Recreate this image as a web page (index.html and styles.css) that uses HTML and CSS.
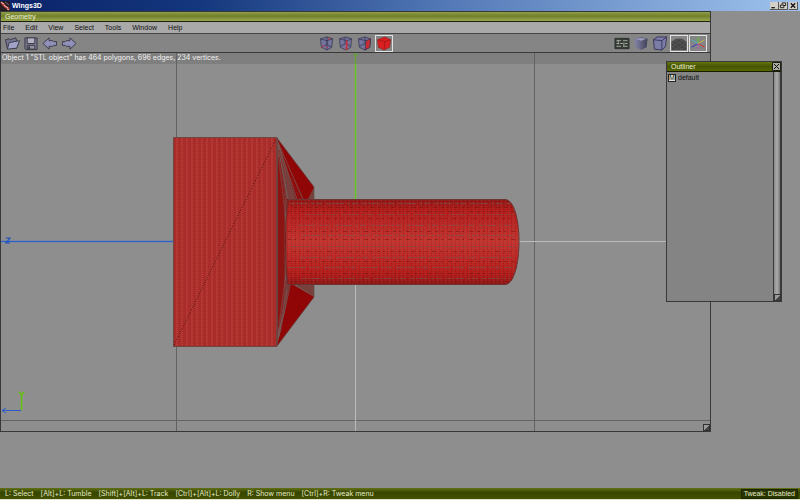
FILE: index.html
```
<!DOCTYPE html>
<html lang="en">
<head>
<meta charset="utf-8">
<title>Wings3D</title>
<link rel="stylesheet" href="styles.css">
</head>
<body>
<header class="titlebar">
  <svg class="logo" viewBox="0 0 10 10"><path fill="#251a20" d="M0 0h10v10H0z"/><path d="M0 1l4 1 2 3 4 2-1 2-4-2-3-3z" fill="#b8413d"/><path d="M1 1l3 2M4 4l4 3M7 8l2 1" stroke="#f3c6c3"/><path d="M5 1l4 3" stroke="#756b80"/></svg>
  <h1>Wings3D</h1>
  <div class="controls">
    <button aria-label="Minimize"><svg viewBox="0 0 8 8"><path d="M1 6.5h4" stroke="#111" stroke-width="1.4"/></svg></button>
    <button aria-label="Restore"><svg viewBox="0 0 8 8" fill="none" stroke="#111"><path d="M3 3V1h4v3H5M1 3.5h4v3H1z"/></svg></button>
    <button class="quit" aria-label="Close"><svg viewBox="0 0 8 8"><path d="M1.5 1.5l5 5M6.5 1.5l-5 5" stroke="#111" stroke-width="1.5"/></svg></button>
  </div>
</header>
<main class="desktop">
  <section class="window geometry">
    <h2>Geometry</h2>
    <nav class="menu"><button>File</button><button>Edit</button><button>View</button><button>Select</button><button>Tools</button><button>Window</button><button>Help</button></nav>
    <div class="toolbar">
      <div class="tools files">
        <button aria-label="Open"><svg viewBox="0 0 16 16" stroke="#3a3a48" stroke-width="1"><path d="M1 4l4-1 1 1 6-2 1 3v8H3z" fill="#74748f"/><path d="M3 14L5 7l11-2-3 8z" fill="#a2a2c8"/></svg></button>
        <button aria-label="Save"><svg viewBox="0 0 16 16" stroke="#3a3a48"><path d="M1.500 2h13v12.500h-12l-1-1z" fill="#77778f"/><path d="M4 2h8v6H4z" fill="#b2b2c2"/><path d="M4 10h8v4H4z" fill="#9494a5"/><path d="M6 11v3" stroke-width="2"/></svg></button>
        <button aria-label="Undo"><svg viewBox="0 0 16 16"><path d="M.5 8L7 2v3h4l1 1h3v4h-3l-1 1H7v3z" fill="#9090ba" stroke="#3a3a48"/></svg></button>
        <button aria-label="Redo"><svg viewBox="0 0 16 16"><path d="M15.500 8L9 2v3H5L4 6H1v4h3l1 1h4v3z" fill="#9090ba" stroke="#3a3a48"/></svg></button>
      </div>
      <div class="tools modes">
        <button aria-label="Vertex selection"><svg viewBox="0 0 16 16" stroke="#363650" stroke-width=".8"><path d="M1 3l7-2 6 2-1 9-5 3-6-3z" fill="#74749c"/><path d="M1 3l7 2 6-2M8 5v10M2 12l6-3 5 3M8 9V1" fill="none"/><path d="M2 12l3-2M9 4l3-2M7 12h2" stroke="#b8404e" stroke-width="1.200"/></svg></button>
        <button aria-label="Edge selection"><svg viewBox="0 0 16 16" stroke="#363650" stroke-width=".8"><path d="M1 3l7-2 6 2-1 9-5 3-6-3z" fill="#74749c"/><path d="M1 3l8 2 5-2M2 11l6-3 5 3M7 8V1" fill="none"/><path d="M9 5L8.500 15" stroke="#c43440" stroke-width="2"/></svg></button>
        <button aria-label="Face selection"><svg viewBox="0 0 16 16" stroke="#363650" stroke-width=".8"><path d="M1 3l7-2 6 2-1 9-5 3-6-3z" fill="#74749c"/><path d="M9 5l5-2-1 9-5 3z" fill="#cc2d35"/><path d="M1 3l8 2M2 11l6-3V1" fill="none"/></svg></button>
        <button class="on" aria-label="Body selection"><svg viewBox="0 0 16 16" stroke="#8a1818" stroke-width=".6"><path d="M1 4l8-3 6 3-1 8-6 3-6-3z" fill="#d91f20"/><path d="M1 4l8 2 6-2M9 6L8 15" fill="none"/></svg></button>
      </div>
      <div class="tools views">
        <button aria-label="Geometry graph"><svg viewBox="0 0 16 16"><path d="M.5 2.500h15v11H.5z" fill="#343b34" stroke="#2b302b"/><path d="M2 5h5M9 5h5M2 8h3M6 8h3M11 8h3M2 11h5M9 11h5M4 4v5M10 7v4" stroke="#a8aca2" stroke-width="1"/></svg></button>
        <button aria-label="Smooth preview"><svg viewBox="0 0 16 16"><defs><linearGradient id="shade"><stop stop-color="#8585a8"/><stop offset="1" stop-color="#404058"/></linearGradient></defs><path d="M1 3l7-2 7 2-1 9-6 3-6-3z" fill="url(#shade)"/><path d="M2 3l6-1 6 1-6 2z" fill="#9a9aba"/></svg></button>
        <button aria-label="Orthographic view"><svg viewBox="0 0 16 16" stroke="#303052" stroke-width=".9"><path d="M1 4l4-3h10l-1 10-4 4-8-1z" fill="#7c7ca8"/><path d="M1 4l9 1v10M10 5l5-4" fill="none"/></svg></button>
        <button class="on" aria-label="Ground plane"><svg viewBox="0 0 16 16"><path d="M0 6l5-3h6l5 3v9H0z" fill="#454545"/><path d="M0 7l12 8M0 11l7 4M3 4l13 8M8 3l8 5M16 7L4 15M16 11l-7 4M13 4L0 12M8 3L0 8" stroke="#626262" stroke-width=".5"/></svg></button>
        <button class="on" aria-label="Axes"><svg viewBox="0 0 16 16"><path d="M8 8V1" stroke="#5fc832"/><path d="M8 8l7 4" stroke="#e0282e"/><path d="M8 8l-7 4" stroke="#3033d0"/><path d="M8 8l7-4" stroke="#c8bc41"/><path d="M8 8L1 4" stroke="#3dbcbe"/><path d="M8 8v6" stroke="#b058be"/></svg></button>
      </div>
    </div>
    <div class="view">
      <p class="info">Object 1 "STL object" has 464 polygons, 696 edges, 234 vertices.</p>
      <svg class="scene" viewBox="1 53 709 378" preserveAspectRatio="xMidYMid slice" role="img" aria-label="Bolt model, side view">
        <defs>
          <pattern id="head" width="5" height="2" patternUnits="userSpaceOnUse"><path d="M0 0h5v2H0z" fill="#ab2b29"/><path d="M1 0h1v2H1z" fill="#b23835"/><path d="M2 0h1v1H2z" fill="#b5403c"/><path d="M4 1h1v1H4z" fill="#a3302d"/></pattern>
          <pattern id="mesh" width="4" height="2" patternUnits="userSpaceOnUse"><path d="M1 0h1v1H1z" fill="#84504b" opacity=".45"/><path d="M3 1h1v1H3z" fill="#85100f" opacity=".4"/></pattern>
          <linearGradient id="round" x2="0" y2="1"><stop stop-color="#8e1715"/><stop offset=".12" stop-color="#b51c1a"/><stop offset=".5" stop-color="#c63530"/><stop offset=".88" stop-color="#b51c1a"/><stop offset="1" stop-color="#8e1715"/></linearGradient>
        </defs>
        <g fill="none" shape-rendering="crispEdges">
          <path d="M176.500 53v378M534.500 53v378M0 420.500h711" stroke="#626262"/>
          <path d="M355.500 285v146M519 241.500h192" stroke="#bababa"/>
          <path d="M355.500 53v146" stroke="#74cc2c" stroke-width="3" opacity=".2"/>
          <path d="M355.500 53v146" stroke="#66c81c"/>
          <path d="M1 241.500h172" stroke="#4a78d0" stroke-width="3" opacity=".25"/>
          <path d="M1 241.500h172" stroke="#2e60c8"/>
        </g>
        <path d="M353.500 54l2 3 3-3" stroke="#5cb81c" fill="none"/>
        <path d="M6 238h4l-4 5h4" stroke="#1c4fc0" fill="none" stroke-width="1.200"/>
        <path d="M3 410.500h18M6 408l-4 2.500 4 2.500" stroke="#2c5cc8" fill="none"/>
        <path d="M21.500 410V395M19 392l2.500 3 2.500-3" stroke="#62c40c" fill="none" stroke-width="1.500"/>
        <path d="M277 138l37 49v110l-37 49z" fill="#900505"/>
        <path d="M314 187v12h-8zM314 297v-13h-23z" fill="#77403a"/>
        <path d="M277 138l37 49-6 12h-12z" fill="#900505"/>
        <path d="M277 138l19 61h-9l-2 42 2 43h4l-14 62z" fill="#74403d"/>
        <path d="M277.500 139l7 52v102l-7 52z" fill="#8b1412"/>
        <path d="M277 140l26 59M277 140l20 59M277 141l15 58M277 142l11 57M277 143l9 77M277 342l20-58M277 342l14-56M277 342l10-51M277 342l9-68M314 297l-20-13" stroke="#796360" stroke-width=".7" fill="none"/>
        <path d="M279 150l13 49M279 157l8 50M279 163l6 48M279 325l11-40M279 321l7-40M288 166l14 33M291 178l9 21" stroke="#892927" stroke-dasharray="2 1" fill="none"/>
        <path d="M291 284l23 13-36 48z" fill="#900505"/>
        <path d="M277 138l37 49v12M277 346l37-49v-13" stroke="#63504d" stroke-width=".7" fill="none"/>
        <path d="M173.500 137.500h103.500v209H173.500z" fill="url(#head)" stroke="#6d4542"/>
        <path d="M277 138v208" stroke="#5f4745"/>
        <path d="M174 345L276 139" stroke="#4e1717" stroke-dasharray="1 2"/>
        <path d="M288 199.500h217c9 0 14 20 14 42s-5 43-14 43H288l-2-20v-43z" fill="url(#round)" stroke="#6b3432"/>
        <path d="M288 200h217c9 0 13 20 13 42s-4 42-13 42H288l-2-20v-43z" fill="url(#mesh)"/>
        <g stroke="#80504b" stroke-dasharray="5 1 2 1 9 3 3 2 6 4" stroke-width="1" opacity=".65" fill="none">
          <path d="M290 203.500h221M305 214.500h208M298 225.500h217M302 235.500h215M291 246.500h226M300 257.500h216M288 267.500h226M302 278.500h208"/>
        </g>
        <g stroke="#74120f" stroke-dasharray="3 3 2 5 4 4" opacity=".5" fill="none">
          <path d="M294 207.500h218M288 211.500h226M292 218.500h223M288 231.500h229M288 239.500h229M293 251.500h224M288 261.500h228M288 273.500h225M294 281.500h214"/>
        </g>
      </svg>
      <span class="grip"></span>
    </div>
  </section>
  <section class="window outliner">
    <div class="caption"><h2>Outliner</h2><button aria-label="Close Outliner"><svg viewBox="0 0 9 9"><path d="M.5 .5h8v8h-8z" fill="#a8ada0" stroke="#1a1d10"/><path d="M2 2l5 5M7 2L2 7" stroke="#101010"/></svg></button></div>
    <div class="body">
      <ul><li><span class="badge">M</span>default</li></ul>
      <div class="scroll"></div>
    </div>
    <span class="grip"></span>
  </section>
</main>
<footer class="status">
  <span>L: Select</span><span>[Alt]+L: Tumble</span><span>[Shift]+[Alt]+L: Track</span><span>[Ctrl]+[Alt]+L: Dolly</span><span>R: Show menu</span><span>[Ctrl]+R: Tweak menu</span>
  <output>Tweak: Disabled</output>
</footer>
</body>
</html>
```
FILE: styles.css
```
* { box-sizing: border-box; }
body {
  margin: 0;
  height: 100vh;
  display: flex;
  flex-direction: column;
  overflow: hidden;
  background: #8e8e8e;
  color: #111;
  font: 7px/10px "Liberation Sans", sans-serif;
}
h1, h2, p, ul { margin: 0; padding: 0; font-size: inherit; font-weight: normal; list-style: none; }
button { border: 0; margin: 0; padding: 0; background: none; color: inherit; font: inherit; }
svg { display: block; }
.titlebar {
  flex: none;
  height: 11px;
  display: flex;
  align-items: center;
  gap: 2px;
  background: linear-gradient(90deg, #0b2369, #14377d 25%, #5277b5 55%, #9fc3ed);
  color: #fff;
}
.titlebar h1 { font-family: "Liberation Sans", sans-serif; font-weight: bold; }
.logo { width: 10px; height: 10px; }
.controls { display: flex; margin-left: auto; padding-right: 2px; }
.controls button {
  width: 9px;
  height: 8px;
  background: #d4d0c8;
  border-right: 1px solid #555;
  border-bottom: 1px solid #555;
}
.controls svg { width: 8px; height: 7px; }
.controls .quit { margin-left: 1px; }
.desktop { position: relative; flex: 1; min-height: 0; }
.window { position: absolute; display: flex; flex-direction: column; border: 1px solid #383838; }
.geometry { left: 0; top: 0; width: calc(100% - 89px); height: calc(100% - 56px); }
.geometry h2 {
  height: 10px;
  padding-left: 4px;
  color: #edf0d5;
  background: linear-gradient(#929f4d, #76852d 35%, #758330 50%, #99a84d);
  border-bottom: 1px solid #1d210d;
}
.menu {
  height: 12px;
  display: flex;
  gap: 11px;
  padding-left: 2px;
  background: #a9a9a9;
  border-bottom: 1px solid #444;
}
.toolbar {
  height: 19px;
  display: grid;
  grid-template-columns: 1fr auto 1fr;
  align-items: center;
  padding: 0 3px 0 2px;
  background: #858585;
  border-bottom: 1px solid #393939;
}
.tools { display: flex; gap: 1px; }
.tools.views { justify-content: flex-end; }
.tools button { width: 18px; height: 17px; border: 1px solid transparent; }
.tools button.on { border-color: #e2e2e2; }
.tools svg { width: 16px; height: 15px; }
.view { position: relative; flex: 1; min-height: 0; background: #8e8e8e; }
.scene { width: 100%; height: 100%; }
.info {
  position: absolute;
  top: 0;
  left: 0;
  right: 0;
  height: 11px;
  padding-left: 1px;
  background: rgb(100 100 100 / 35%);
  color: #f3f3f3;
  font-family: Inter, sans-serif;
}
.grip {
  position: absolute;
  right: 0;
  bottom: 0;
  width: 7px;
  height: 7px;
  border: 1px solid #333;
  background: linear-gradient(135deg, #999 50%, #444 50%);
}
.outliner { right: 18px; top: 50px; width: 116px; height: 241px; background: #848484; }
.caption {
  flex: none;
  height: 10px;
  display: flex;
  justify-content: space-between;
  padding-left: 4px;
  color: #edf0d5;
  background: linear-gradient(#66750e, #465500 50%, #566700);
  border-bottom: 1px solid #171c00;
}
.caption svg { width: 9px; height: 9px; }
.body { flex: 1; display: flex; }
.body ul { flex: 1; padding: 1px; }
.body li { display: flex; align-items: center; gap: 2px; }
.badge {
  width: 8px;
  height: 8px;
  line-height: 6px;
  text-align: center;
  background: #e4e6d6;
  border: 1px solid #222;
}
.scroll {
  width: 8px;
  border: solid #3a3a3a;
  border-width: 0 1px;
  background: linear-gradient(90deg, #8a8a8a, #ababab 50%, #777);
}
.status {
  flex: none;
  height: 12px;
  padding: 1px 0 0 5px;
  display: flex;
  gap: 7px;
  background: linear-gradient(#627115, #374600 40%, #425000);
  border-bottom: 1px solid #dfe3cc;
  color: #e7ebc8;
  white-space: nowrap;
}
.status span { font-family: Inter, sans-serif; }
.status output {
  margin: 0 2px 0 auto;
  padding: 0 2px;
  background: #293500;
  border: 1px solid #1d2500;
  line-height: 8px;
}
```
